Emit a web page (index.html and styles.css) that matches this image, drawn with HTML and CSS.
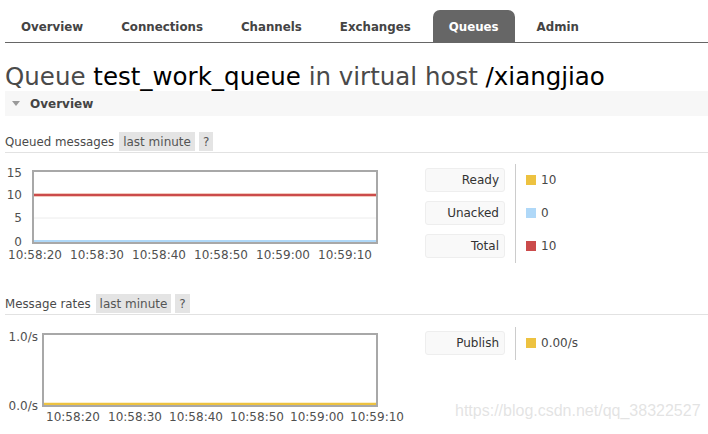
FILE: index.html
```html
<!DOCTYPE html>
<html>
<head>
<meta charset="utf-8">
<link rel="stylesheet" href="styles.css">
</head>
<body>
<div class="page">
  <nav class="tabs">
    <a class="tab">Overview</a>
    <a class="tab">Connections</a>
    <a class="tab">Channels</a>
    <a class="tab">Exchanges</a>
    <a class="tab active">Queues</a>
    <a class="tab">Admin</a>
  </nav>
  <h1 class="title">Queue <b>test_work_queue</b> in virtual host <b>/xiangjiao</b></h1>
  <div class="section-head"><span class="tri"></span>Overview</div>

  <div class="sub-head">
    <span class="sub-label">Queued messages</span>
    <span class="badge">last minute</span>
    <span class="badge">?</span>
  </div>
  <div class="chart-row">
    <svg class="chart" width="415" height="100" viewBox="5 163 415 100">
      <rect x="33" y="171" width="344" height="72" fill="#fff"/>
      <line x1="34" y1="218" x2="376" y2="218" stroke="#ececec" stroke-width="1"/>
      <line x1="34" y1="195" x2="376" y2="195" stroke="#f3c9bd" stroke-width="4"/>
      <line x1="34" y1="195" x2="376" y2="195" stroke="#cb4b4b" stroke-width="2"/>
      <line x1="34" y1="241" x2="376" y2="241" stroke="#afd8f8" stroke-width="2"/>
      <rect x="33" y="171" width="344" height="72" fill="none" stroke="#a8a8a8" stroke-width="2"/>
      <g class="ylab" text-anchor="end">
        <text x="22" y="177">15</text>
        <text x="22" y="199">10</text>
        <text x="22" y="222">5</text>
        <text x="22" y="246">0</text>
      </g>
      <g class="xlab" text-anchor="middle">
        <text x="35" y="259">10:58:20</text>
        <text x="97" y="259">10:58:30</text>
        <text x="159" y="259">10:58:40</text>
        <text x="221" y="259">10:58:50</text>
        <text x="283" y="259">10:59:00</text>
        <text x="345" y="259">10:59:10</text>
      </g>
    </svg>
    <div class="legend l1">
      <div class="legend-labels">
        <div class="lbox">Ready</div>
        <div class="lbox">Unacked</div>
        <div class="lbox">Total</div>
      </div>
      <div class="legend-values">
        <div class="lval"><span class="sq ready"></span>10</div>
        <div class="lval"><span class="sq unacked"></span>0</div>
        <div class="lval"><span class="sq total"></span>10</div>
      </div>
    </div>
  </div>

  <div class="sub-head second">
    <span class="sub-label">Message rates</span>
    <span class="badge">last minute</span>
    <span class="badge">?</span>
  </div>
  <div class="chart-row">
    <svg class="chart" width="415" height="100" viewBox="5 324 415 100">
      <rect x="43" y="333" width="334" height="72" fill="#fff"/>
      <line x1="44" y1="403" x2="376" y2="403" stroke="#edc240" stroke-width="2.4"/>
      <rect x="43" y="333" width="334" height="72" fill="none" stroke="#a8a8a8" stroke-width="2"/>
      <g class="ylab" text-anchor="end">
        <text x="38" y="340">1.0/s</text>
        <text x="38" y="409">0.0/s</text>
      </g>
      <g class="xlab" text-anchor="middle">
        <text x="73" y="420">10:58:20</text>
        <text x="135" y="420">10:58:30</text>
        <text x="196" y="420">10:58:40</text>
        <text x="257" y="420">10:58:50</text>
        <text x="317" y="420">10:59:00</text>
        <text x="377" y="420">10:59:10</text>
      </g>
    </svg>
    <div class="legend l2">
      <div class="legend-labels">
        <div class="lbox">Publish</div>
      </div>
      <div class="legend-values">
        <div class="lval"><span class="sq ready"></span>0.00/s</div>
      </div>
    </div>
  </div>
</div>
<div class="watermark">https://blog.csdn.net/qq_38322527</div>
</body>
</html>
```
FILE: styles.css
```css
html, body {
  margin: 0;
  padding: 0;
  background: #fff;
}
body {
  font-family: "DejaVu Sans", Verdana, sans-serif;
  font-size: 12px;
  color: #484848;
  width: 708px;
  height: 434px;
  overflow: hidden;
  position: relative;
}
.page {
  padding-left: 5px;
}
.tabs {
  display: flex;
  gap: 6px;
  padding-top: 10px;
  border-bottom: 1px solid #666;
  height: 32px;
}
.tab {
  display: flex;
  align-items: center;
  padding: 1px 16px 0 16px;
  box-sizing: border-box;
  height: 32px;
  font-weight: bold;
  font-size: 11.8px;
  color: #444;
  border-radius: 7px 7px 0 0;
}
.tab.active {
  background: #666;
  color: #fff;
}
.title {
  margin: 20px 0 0 0;
  font-size: 24.5px;
  font-weight: normal;
  line-height: 28px;
  color: #4a4a4a;
  white-space: nowrap;
}
.title b {
  font-weight: normal;
  color: #000;
}
.section-head {
  height: 25px;
  background: #f7f7f7;
  display: flex;
  align-items: center;
  font-weight: bold;
  font-size: 12px;
  color: #444;
}
.tri {
  width: 0;
  height: 0;
  border-left: 4px solid transparent;
  border-right: 4px solid transparent;
  border-top: 5px solid #999;
  margin: 0 10px 0 7px;
}
.sub-head {
  margin-top: 16px;
  height: 20px;
  display: flex;
  align-items: stretch;
  gap: 4px;
  border-bottom: 1px solid #e2e2e2;
}
.sub-label {
  display: flex;
  align-items: center;
  margin-right: 1px;
  font-size: 11.8px;
  color: #4a4a4a;
}
.badge {
  display: flex;
  align-items: center;
  padding: 0 4px;
  height: 19px;
  background: #e4e4e4;
  color: #555;
}
.chart-row {
  display: flex;
  align-items: flex-start;
  margin-top: 10px;
}
.chart-row + .sub-head {
  margin-top: 31px;
}
.chart {
  display: block;
  flex: none;
}
.ylab text, .xlab text {
  font-family: "DejaVu Sans", Verdana, sans-serif;
  font-size: 12px;
  fill: #505050;
}
.legend {
  display: flex;
  margin-left: 5px;
}
.legend.l1 {
  margin-top: 1px;
}
.legend.l2 {
  margin-top: 2px;
}
.legend-labels {
  display: flex;
  flex-direction: column;
  gap: 9px;
  padding: 4px 0 5px 0;
}
.lbox {
  width: 80px;
  height: 24px;
  box-sizing: border-box;
  background: #f9f9f9;
  border: 1px solid #eee;
  border-radius: 3px;
  display: flex;
  align-items: center;
  justify-content: flex-end;
  padding-right: 5px;
  color: #333;
}
.legend-values {
  display: flex;
  flex-direction: column;
  gap: 9px;
  padding: 4px 0 5px 10px;
  margin-left: 10px;
  border-left: 1px solid #ccc;
}
.lval {
  height: 24px;
  display: flex;
  align-items: center;
  color: #484848;
}
.sq {
  width: 10px;
  height: 10px;
  margin-right: 5px;
}
.sq.ready { background: #edc240; }
.sq.unacked { background: #afd8f8; }
.sq.total { background: #cb4b4b; }
.watermark {
  position: absolute;
  left: 455px;
  top: 402px;
  font-family: "Liberation Sans", Arial, sans-serif;
  font-size: 16px;
  color: rgba(200, 200, 200, 0.5);
  white-space: nowrap;
}
```
